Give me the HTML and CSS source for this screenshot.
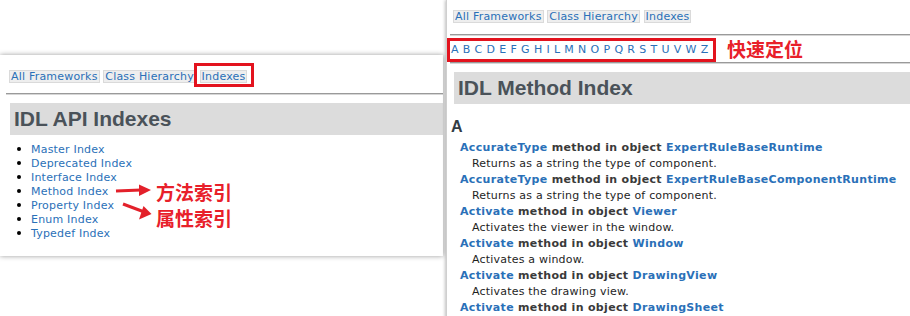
FILE: index.html
```html
<!DOCTYPE html>
<html>

<head>
    <meta charset="utf-8" />
    <title>IDL API Indexes</title>
    <link rel="stylesheet" href="styles.css">
</head>

<body>
    <div class="desk">
        <!--左图：索引首页-->
        <div class="shot shot-left">
            <div class="nav">
                <a href="#">All Frameworks</a>
                <a href="#">Class Hierarchy</a>
                <a href="#">Indexes</a>
            </div>
            <hr />
            <h1>IDL API Indexes</h1>
            <ul class="index-list">
                <li><a href="#">Master Index</a></li>
                <li><a href="#">Deprecated Index</a></li>
                <li><a href="#">Interface Index</a></li>
                <li><a href="#">Method Index</a></li>
                <li><a href="#">Property Index</a></li>
                <li><a href="#">Enum Index</a></li>
                <li><a href="#">Typedef Index</a></li>
            </ul>
        </div>

        <!--右图：方法索引-->
        <div class="shot shot-right">
            <div class="nav">
                <a href="#">All Frameworks</a>
                <a href="#">Class Hierarchy</a>
                <a href="#">Indexes</a>
            </div>
            <hr />
            <div class="letters">
                <a href="#A">A</a> <a href="#B">B</a> <a href="#C">C</a> <a href="#D">D</a> <a href="#E">E</a> <a href="#F">F</a> <a href="#G">G</a> <a href="#H">H</a> <a href="#I">I</a> <a href="#L">L</a> <a href="#M">M</a> <a href="#N">N</a> <a href="#O">O</a> <a href="#P">P</a> <a href="#Q">Q</a> <a href="#R">R</a> <a href="#S">S</a> <a href="#T">T</a> <a href="#U">U</a> <a href="#V">V</a> <a href="#W">W</a> <a href="#Z">Z</a>
            </div>
            <hr />
            <h1>IDL Method Index</h1>
            <h2 id="A">A</h2>
            <dl class="methods">
                <dt><a href="#">AccurateType</a> method in object <a href="#">ExpertRuleBaseRuntime</a></dt>
                <dd>Returns as a string the type of component.</dd>
                <dt><a href="#">AccurateType</a> method in object <a href="#">ExpertRuleBaseComponentRuntime</a></dt>
                <dd>Returns as a string the type of component.</dd>
                <dt><a href="#">Activate</a> method in object <a href="#">Viewer</a></dt>
                <dd>Activates the viewer in the window.</dd>
                <dt><a href="#">Activate</a> method in object <a href="#">Window</a></dt>
                <dd>Activates a window.</dd>
                <dt><a href="#">Activate</a> method in object <a href="#">DrawingView</a></dt>
                <dd>Activates the drawing view.</dd>
                <dt><a href="#">Activate</a> method in object <a href="#">DrawingSheet</a></dt>
            </dl>
        </div>

        <!--标注-->
        <div class="mark mark-indexes"></div>
        <div class="mark mark-letters"></div>
        <div class="note note-method">方法索引</div>
        <div class="note note-property">属性索引</div>
        <div class="note note-letters">快速定位</div>
        <svg class="arrows" width="910" height="316" viewBox="0 0 910 316">
            <line x1="116" y1="191" x2="141" y2="190" stroke="#e3202a" stroke-width="3" />
            <polygon points="151,190 139,184.5 139,196" fill="#e3202a" />
            <line x1="123" y1="204" x2="143" y2="211.5" stroke="#e3202a" stroke-width="3" />
            <polygon points="151.5,214 143.5,206 139,219.5" fill="#e3202a" />
        </svg>
    </div>
</body>

</html>
```

FILE: styles.css
```css
* {
    margin: 0;
    padding: 0;
}

body {
    background: #fff;
    font-family: "DejaVu Sans", Verdana, sans-serif;
    font-size: 11px;
    letter-spacing: 0.2px;
    color: #1e1e1e;
}

a {
    color: #2a70b8;
    text-decoration: none;
}

li {
    list-style: none;
}

.desk {
    position: relative;
    display: flex;
    align-items: flex-start;
    width: 910px;
    height: 316px;
    overflow: hidden;
}

.shot {
    background: #fff;
    overflow: hidden;
}

.shot hr {
    height: 0;
    border: none;
    border-top: 1px solid #9a9a9a;
    border-bottom: 1px solid #d6d6d6;
}

.shot h1 {
    height: 32px;
    line-height: 32px;
    background: #dcdcdc;
    font-family: "Liberation Sans", Arial, sans-serif;
    font-size: 21px;
    font-weight: bold;
    letter-spacing: 0;
    color: #4a5259;
}

.nav a {
    display: inline-block;
    line-height: 11px;
    padding: 0 1px;
    background: #eeeeee;
    border: 1px solid #dadada;
}

/*左图*/
.shot-left {
    flex: none;
    width: 443px;
    height: 186px;
    margin-top: 55px;
    padding-top: 15px;
    box-shadow: 0 0 5px rgba(0, 0, 0, 0.4);
}

.shot-left .nav {
    padding-left: 9px;
    height: 13px;
}

.shot-left hr {
    margin: 10px 0 0 6px;
}

.shot-left h1 {
    margin: 8px 0 0 10px;
    padding-left: 4px;
}

.index-list {
    margin-top: 7px;
}

.index-list li {
    display: flex;
    align-items: center;
    height: 14px;
    padding-left: 17px;
}

.index-list li::before {
    content: "";
    width: 4px;
    height: 4px;
    margin-right: 10px;
    border-radius: 50%;
    background: #000;
}

/*右图*/
.shot-right {
    flex: none;
    width: 463px;
    height: 316px;
    margin-left: 3px;
    padding-top: 10px;
    border-left: 1px solid #cfcfcf;
    box-shadow: -1px 0 3px rgba(0, 0, 0, 0.25);
}

.shot-right .nav {
    padding-left: 6px;
    height: 13px;
}

.shot-right hr {
    margin: 11px 0 0 3px;
}

.letters {
    margin-top: 6px;
    padding-left: 4px;
    line-height: 16px;
    letter-spacing: 0.15px;
    word-spacing: 0.45px;
}

.letters + hr {
    margin-top: 4px;
}

.shot-right h1 {
    margin: 8px 0 0 7px;
    padding-left: 4px;
}

.shot-right h2 {
    margin: 13px 0 0 4px;
    font-family: "Liberation Sans", Arial, sans-serif;
    font-size: 16px;
    line-height: 20px;
    letter-spacing: 0;
    color: #333c44;
}

.methods {
    margin-top: 3px;
    line-height: 16px;
}

.methods dt {
    padding-left: 13px;
    font-weight: bold;
    letter-spacing: 0.32px;
    color: #3a3a3a;
}

.methods dd {
    padding-left: 25px;
}

/*标注*/
.mark {
    position: absolute;
    border: 3px solid #e3131e;
}

.mark-indexes {
    left: 194px;
    top: 63px;
    width: 54px;
    height: 18px;
}

.mark-letters {
    left: 447px;
    top: 38px;
    width: 263px;
    height: 18px;
}

.note {
    position: absolute;
    font-family: "Noto Sans CJK SC", sans-serif;
    font-size: 19px;
    font-weight: bold;
    line-height: 19px;
    letter-spacing: 0;
    color: #e8202a;
}

.note-method {
    left: 156px;
    top: 182px;
}

.note-property {
    left: 156px;
    top: 208px;
}

.note-letters {
    left: 727px;
    top: 39px;
}

.arrows {
    position: absolute;
    left: 0;
    top: 0;
    pointer-events: none;
}
```
